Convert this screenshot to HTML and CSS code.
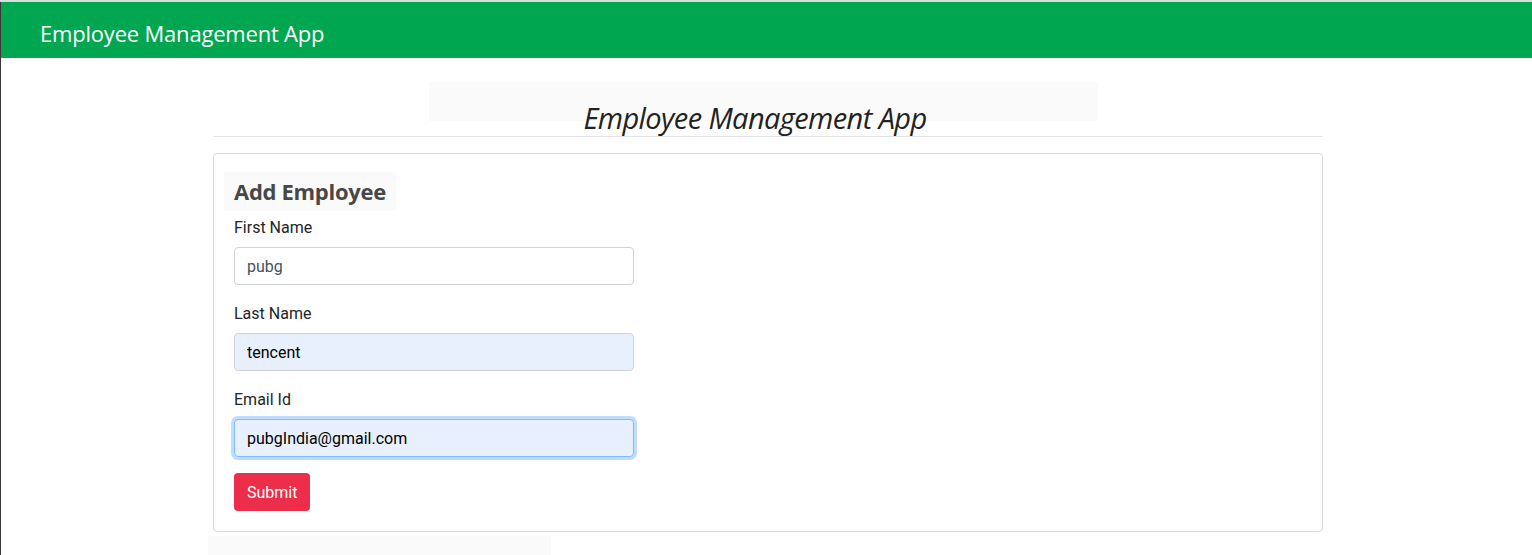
FILE: index.html
```html
<!DOCTYPE html>
<html lang="en">
<head>
<meta charset="utf-8">
<title>Employee Management App</title>
<link rel="stylesheet" href="styles.css">
</head>
<body>
<header class="navbar">
  <span class="brand">Employee Management App</span>
</header>
<main class="main">
  <div class="container">
    <div class="title-bg"></div>
    <h2 class="page-title">Employee Management App</h2>
    <hr class="divider">
    <section class="card">
      <h3 class="card-title">Add Employee</h3>
      <form class="form">
        <div class="form-group">
          <label class="label" for="fn">First Name</label>
          <input class="input" id="fn" type="text" value="pubg">
        </div>
        <div class="form-group">
          <label class="label" for="ln">Last Name</label>
          <input class="input input-autofill" id="ln" type="text" value="tencent">
        </div>
        <div class="form-group">
          <label class="label" for="em">Email Id</label>
          <input class="input input-autofill input-focus" id="em" type="text" value="pubgIndia@gmail.com">
        </div>
        <button class="btn-submit" type="button">Submit</button>
      </form>
    </section>
    <div class="footer-bg"></div>
  </div>
</main>
</body>
</html>
```
FILE: styles.css
```css
html {
  border-top: 2px solid #dcdcdc;
  background: #fff;
}
body {
  margin: 0;
  border-left: 1px solid #3d3639;
  min-height: 553px;
  box-sizing: border-box;
  font-family: Roboto, "Liberation Sans", sans-serif;
  color: #212529;
  overflow: hidden;
}
.navbar {
  box-sizing: border-box;
  height: 56px;
  background: #00a650;
  display: flex;
  align-items: center;
  padding: 6px 0 0 39px;
}
.brand {
  font-family: "Open Sans", sans-serif;
  font-size: 22px;
  color: #fff;
  letter-spacing: -0.2px;
}
.main {
  padding-left: 3px;
}
.container {
  width: 1110px;
  margin: 0 auto;
}
.title-bg {
  margin-top: 24px;
  margin-left: 216px;
  width: 669px;
  height: 39px;
  background: #fafafa;
}
.page-title {
  margin: -21px 0 0;
  padding-right: 26px;
  text-align: center;
  font-family: "Open Sans", sans-serif;
  font-style: italic;
  font-weight: 400;
  font-size: 29px;
  line-height: 36px;
  color: #222;
  letter-spacing: -0.6px;
}
.divider {
  margin: 0 0 16px;
  border: 0;
  border-top: 1px solid #e3e3e3;
}
.card {
  border: 1px solid #dadada;
  border-radius: 4px;
  padding: 18px 20px 20px;
}
.card-title {
  display: inline-block;
  margin: 0 0 4px -10px;
  padding: 0 10px;
  height: 39px;
  line-height: 39px;
  background: #fafafa;
  font-family: "Open Sans", sans-serif;
  font-weight: 700;
  font-size: 22px;
  color: #474747;
  letter-spacing: -0.3px;
}
.form-group {
  margin-bottom: 16px;
}
.label {
  display: block;
  padding-top: 1px;
  margin-bottom: 7px;
  font-size: 16px;
  line-height: 24px;
}
.input {
  display: block;
  box-sizing: border-box;
  width: 400px;
  height: 38px;
  padding: 6px 12px;
  border: 1px solid #ced4da;
  border-radius: 4px;
  font-family: Roboto, sans-serif;
  font-size: 16px;
  color: #495057;
  background: #fff;
  outline: none;
}
.input-autofill {
  background: #e8f0fe;
  color: #000;
}
.input-focus {
  border-color: #80bdff;
  box-shadow: 0 0 0 3px rgba(0, 123, 255, 0.25);
}
.btn-submit {
  display: block;
  height: 38px;
  padding: 6px 13px;
  border: 0;
  border-radius: 4px;
  background: #ed2e4a;
  color: #fff;
  font-family: Roboto, sans-serif;
  font-size: 16px;
}
.footer-bg {
  margin: 4px 0 0 -5px;
  width: 343px;
  height: 30px;
  background: #fafafa;
}
```
